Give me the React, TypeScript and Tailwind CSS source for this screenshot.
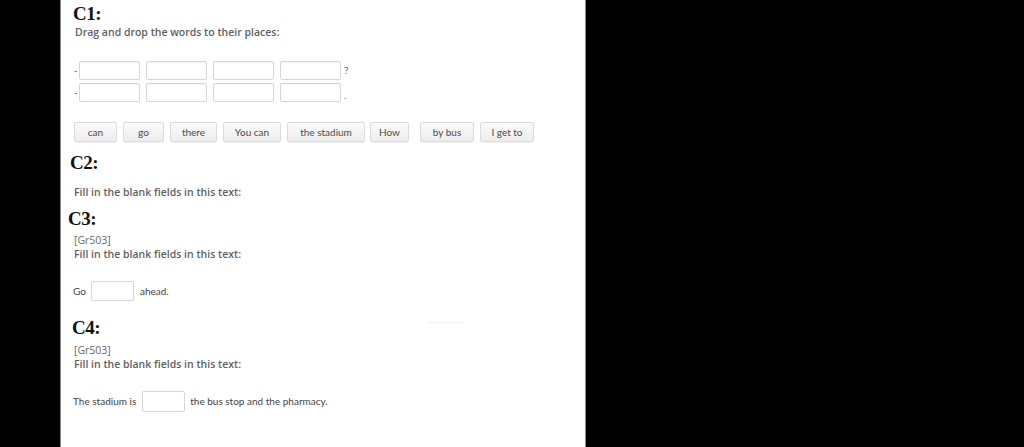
import React from "react";

const Heading = ({ text, ml }: { text: string; ml: string }) => (
  <div
    className={`h-[26px] text-[19px] leading-[26px] font-bold text-[#111] tracking-[-0.5px] ${ml}`}
    style={{ fontFamily: '"Liberation Serif", "Times New Roman", serif' }}
  >
    {text}
  </div>
);

const Box = () => (
  <div className="w-[61px] h-[19px] border border-[#d6d6d6] rounded-[2px] bg-white shadow-[inset_0_1px_1px_rgba(0,0,0,0.04)]" />
);

const words = ["can", "go", "there", "You can", "the stadium", "How", "by bus", "I get to"];
const widths = ["w-[43px]", "w-[41px]", "w-[47px]", "w-[58px]", "w-[78px]", "w-[39px]", "w-[54px]", "w-[54px]"];
const margins = ["", "ml-[6px]", "ml-[6px]", "ml-[6px]", "ml-[6px]", "ml-[5px]", "ml-[11px]", "ml-[6px]"];

export default function App() {
  const sans = { fontFamily: '"Open Sans", "Noto Sans", sans-serif' };
  const small = { fontFamily: '"Lato", "Liberation Sans", sans-serif' };
  return (
    <div className="w-[1024px] h-[447px] bg-black flex overflow-hidden">
      <div className="ml-[60px] w-[526px] h-full bg-white border-l border-r border-[#8c8c8c] flex flex-col relative">
        <div className="mt-[1px]">
          <Heading text="C1:" ml="ml-[12px]" />
        </div>
        <div className="mt-[-3px] ml-[14px] text-[10.5px] leading-[16px] text-[#5f5f5f] font-semibold" style={sans}>
          Drag and drop the words to their places:
        </div>
        <div className="mt-[21px] ml-[13px] flex flex-col gap-[3px]">
          {["?", "."].map((end, i) => (
            <div key={i} className="flex items-center h-[19px]">
              <span className="w-[5px] text-[9px] text-[#555]" style={small}>-</span>
              <div className="flex gap-[6px]">
                <Box />
                <Box />
                <Box />
                <Box />
              </div>
              <span className={`ml-[3px] text-[10px] text-[#666] ${i === 1 ? "mt-[6px]" : ""}`} style={small}>{end}</span>
            </div>
          ))}
        </div>
        <div className="mt-[20px] ml-[13px] flex">
          {words.map((w, i) => (
            <div
              key={w}
              className={`${widths[i]} ${margins[i]} h-[20px] flex items-center justify-center border border-[#dcdcdc] rounded-[2px] bg-gradient-to-b from-[#fbfbfb] to-[#ededed] text-[10px] text-[#4a4a4a] shadow-[0_1px_1px_rgba(0,0,0,0.06)]`}
              style={small}
            >
              {w}
            </div>
          ))}
        </div>
        <div className="mt-[8px]">
          <Heading text="C2:" ml="ml-[9px]" />
        </div>
        <div className="mt-[8px] ml-[13px] text-[10.5px] leading-[16px] text-[#5f5f5f] font-semibold" style={sans}>
          Fill in the blank fields in this text:
        </div>
        <div className="mt-[6px]">
          <Heading text="C3:" ml="ml-[7px]" />
        </div>
        <div className="mt-[1px] ml-[13px] text-[10.5px] leading-[14px] text-[#6a6a6a]" style={sans}>
          [Gr503]
        </div>
        <div className="ml-[13px] text-[10.5px] leading-[14px] text-[#5f5f5f] font-semibold" style={sans}>
          Fill in the blank fields in this text:
        </div>
        <div className="mt-[20px] ml-[12px] flex items-center h-[20px] text-[10px] text-[#444]" style={small}>
          <span>Go</span>
          <div className="ml-[5px] w-[43px] h-[20px] border border-[#d6d6d6] rounded-[2px] bg-white" />
          <span className="ml-[6px]">ahead.</span>
        </div>
        <div className="mt-[14px]">
          <Heading text="C4:" ml="ml-[11px]" />
        </div>
        <div className="mt-[2px] ml-[13px] text-[10.5px] leading-[14px] text-[#6a6a6a]" style={sans}>
          [Gr503]
        </div>
        <div className="ml-[13px] text-[10.5px] leading-[14px] text-[#5f5f5f] font-semibold" style={sans}>
          Fill in the blank fields in this text:
        </div>
        <div className="mt-[20px] ml-[12px] flex items-center h-[21px] text-[10px] text-[#444]" style={small}>
          <span>The stadium is</span>
          <div className="ml-[6px] w-[43px] h-[21px] border border-[#d6d6d6] rounded-[2px] bg-white" />
          <span className="ml-[5px]">the bus stop and the pharmacy.</span>
        </div>
        <div className="absolute left-[367px] top-[322px] w-[35px] h-[1px] bg-[#eeeeee]" />
      </div>
    </div>
  );
}
